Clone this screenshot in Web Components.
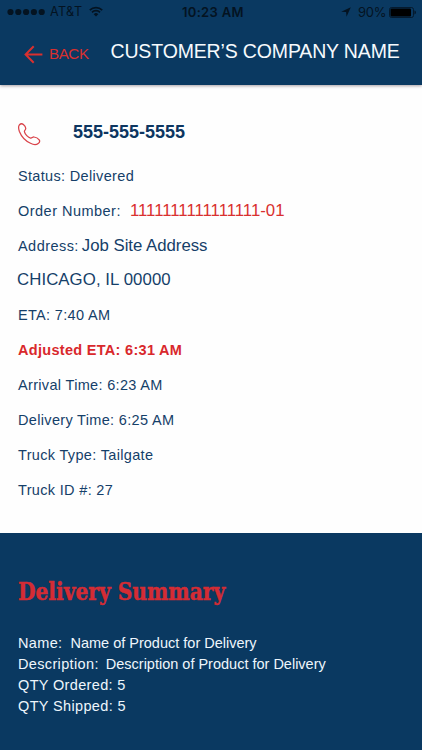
<!DOCTYPE html>
<html lang="en">
<head>
<meta charset="utf-8">
<title>Delivery details</title>
<style>
  html, body { margin: 0; background: #fefefe; }
  body { font-family: "Liberation Sans", Arial, sans-serif; width: 422px; height: 750px; overflow: hidden; }
</style>
</head>
<body>
<delivery-screen></delivery-screen>
<script>
class BaseElement extends HTMLElement {
  connectedCallback() {
    if (!this.shadowRoot) this.attachShadow({ mode: "open" }).innerHTML = this.render();
  }
}

/* Carrier, clock and battery */
customElements.define("status-bar", class extends BaseElement {
  render() { return `
    <style>
      :host { display: grid; grid-template-columns: 182px 1fr 81px; height: 24px; align-items: center; font: 12.6px/24px Inter, sans-serif; color: #041321; white-space: nowrap; }
      div { display: flex; align-items: center; height: 24px; }
      svg { display: block; flex: none; }
      .left { padding-left: 7px; }
      .carrier { margin-left: 5px; width: 34px; letter-spacing: .4px; }
      .time { font-weight: 600; font-size: 13px; letter-spacing: .3px; }
      .pct { margin-left: 7px; width: 27px; font-size: 13px; letter-spacing: -.3px; }
      .bat { margin-left: 4px; }
    </style>
    <div class="left">
      <svg width="38" height="8" viewBox="0 0 38 8" fill="currentColor"><circle cx="3.5" cy="4" r="3.1"/><circle cx="11.3" cy="4" r="3.1"/><circle cx="19.1" cy="4" r="3.1"/><circle cx="26.9" cy="4" r="3.1"/><circle cx="34.7" cy="4" r="3.1"/></svg>
      <span class="carrier">AT&amp;T</span>
      <svg style="margin-left:5px;margin-top:-2px" width="14" height="11" viewBox="0 0 14 11" fill="none" stroke="currentColor" stroke-width="1.7"><path d="M.8 4.2a8.7 8.7 0 0 1 12.4 0M3 6.4a5.6 5.6 0 0 1 8 0"/><path d="M7 10.6 4.7 8.2a3.3 3.3 0 0 1 4.6 0Z" fill="currentColor" stroke="none"/></svg>
    </div>
    <div><span class="time">10:23 AM</span></div>
    <div>
      <svg style="margin-top:-1px" width="10" height="10" viewBox="0 0 10 10" fill="currentColor"><path d="M9.8.3 5.5 9.8 5.1 5 .2 4.7Z"/></svg>
      <span class="pct">90%</span>
      <svg class="bat" width="27" height="11" viewBox="0 0 27 11"><rect x=".5" y=".5" width="24" height="10" rx="2" fill="none" stroke="currentColor" stroke-width=".8"/><rect x="1.5" y="1.5" width="20.5" height="8" rx="1" fill="#000"/><path d="M25.5 3.6c1.8.6 1.8 3.2 0 3.8Z" fill="currentColor"/></svg>
    </div>`; }
});

customElements.define("back-link", class extends BaseElement {
  render() { return `
    <style>
      :host { display: flex; align-items: center; color: #d9302f; font-size: 15.2px; line-height: 20px; letter-spacing: -.45px; }
      svg { display: block; margin-right: 6px; }
    </style>
    <svg width="19" height="19" viewBox="0 0 19 19" fill="none" stroke="currentColor" stroke-width="2"><path d="M18.4 9.5H1.6M9.7 1.3 1.6 9.5l8.1 8.2"/></svg><slot></slot>`; }
});

customElements.define("app-header", class extends BaseElement {
  render() { return `
    <style>
      :host { display: block; height: 85px; background: #0a3961; box-shadow: 0 1px 3px rgba(60,40,50,.45); position: relative; }
      .bar { display: flex; height: 61px; }
      back-link { height: 20px; margin: 20px 0 0 24px; width: 86.5px; }
      h1 { margin: 15px 0 0; font-weight: 400; font-size: 19.5px; letter-spacing: -.15px; line-height: 24px; color: #f6fafd; white-space: nowrap; }
    </style>
    <status-bar></status-bar>
    <div class="bar"><back-link>BACK</back-link><h1><slot></slot></h1></div>`; }
});

customElements.define("phone-row", class extends BaseElement {
  render() { return `
    <style>
      :host { display: flex; height: 24px; padding: 36px 0 14px 18px; color: #0d3661; }
      svg { display: block; margin: 1.5px 32px 0 0; flex: none; }
      b { font-size: 18px; line-height: 22px; }
    </style>
    <svg width="23" height="23" viewBox="0 0 23 23" fill="none" stroke="#d94249" stroke-width="1.25" stroke-linejoin="round"><path d="M1.3 2C2.400.8 4.300.6 5.400 1.500c1.400 1.200 2.700 3.100 2.200 4.600C7.200 7.200 6.300 7.500 6.400 8.700c.4 2.300 3.800 5.900 6.200 6.400 1.400.2 1.900-1.200 3.400-1.100 1.900.1 4.200 1.500 5.200 2.900.8 1.200.2 2.700-1 3.600-2.100 1.600-4.900 1.200-7.700-.2C7.600 18 3.300 13.300 1.400 8.500.5 5.900.3 3.400 1.300 2Z"/></svg>
    <b><slot></slot></b>`; }
});

/* Label with an optional larger value in the "value" slot */
customElements.define("detail-row", class extends BaseElement {
  render() { return `
    <style>
      :host { display: flex; align-items: baseline; height: 34.85px; line-height: 35.6px; padding-left: 18px; font-size: 14.5px; letter-spacing: .33px; color: #153f69; white-space: nowrap; }
      :host([alert]) { color: #d9282c; font-weight: 700; letter-spacing: .3px; }
      ::slotted([slot=value]) { font-size: 16.8px; letter-spacing: -.02px; margin-left: var(--gap, 0); color: var(--value, inherit); }
    </style>
    <span><slot></slot></span><slot name="value"></slot>`; }
});

customElements.define("summary-line", class extends BaseElement {
  render() { return `
    <style>
      :host { display: flex; height: 21.3px; line-height: 21.3px; font-size: 14.5px; letter-spacing: .35px; color: #eef6fc; white-space: nowrap; }
      ::slotted([slot=value]) { letter-spacing: 0; margin-left: var(--gap, 0); padding-top: .6px; }
    </style>
    <span><slot></slot></span><slot name="value"></slot>`; }
});

customElements.define("summary-panel", class extends BaseElement {
  render() { return `
    <style>
      :host { display: block; box-sizing: border-box; height: 217px; padding: 43px 0 0 18px; background: #0a3961; }
      h2 { margin: 0 0 24.5px; height: 32px; font: 700 24px/32px "DejaVu Serif Condensed", "DejaVu Serif", serif; font-stretch: condensed; -webkit-text-stroke: .5px; color: #d42c34; white-space: nowrap; width: max-content; transform: scaleX(.935); transform-origin: 0 0; }
    </style>
    <h2>Delivery Summary</h2><slot></slot>`; }
});

customElements.define("delivery-screen", class extends BaseElement {
  render() { return `
    <style>
      :host { display: block; width: 422px; height: 750px; overflow: hidden; background: #fefefe; }
      .details { height: 448px; }
      .order { --gap: 9px; --value: #d9302f; letter-spacing: .48px; line-height: 34px; }
      .address { --gap: 3px; letter-spacing: .45px; line-height: 33.6px; }
      .city { font-size: 16.8px; letter-spacing: .08px; padding-left: 17px; line-height: 32px; }
      .name { --gap: 8px; }
      .desc { --gap: 7px; }
    </style>
    <app-header>CUSTOMER’S COMPANY NAME</app-header>
    <div class="details">
      <phone-row>555-555-5555</phone-row>
      <detail-row>Status: Delivered</detail-row>
      <detail-row class="order">Order Number:<span slot="value">1111111111111111-01</span></detail-row>
      <detail-row class="address">Address:<span slot="value">Job Site Address</span></detail-row>
      <detail-row class="city">CHICAGO, IL 00000</detail-row>
      <detail-row>ETA: 7:40 AM</detail-row>
      <detail-row alert>Adjusted ETA: 6:31 AM</detail-row>
      <detail-row>Arrival Time: 6:23 AM</detail-row>
      <detail-row>Delivery Time: 6:25 AM</detail-row>
      <detail-row>Truck Type: Tailgate</detail-row>
      <detail-row>Truck ID #: 27</detail-row>
    </div>
    <summary-panel>
      <summary-line class="name">Name:<span slot="value">Name of Product for Delivery</span></summary-line>
      <summary-line class="desc">Description:<span slot="value">Description of Product for Delivery</span></summary-line>
      <summary-line>QTY Ordered: 5</summary-line>
      <summary-line>QTY Shipped: 5</summary-line>
    </summary-panel>`; }
});
</script>
</body>
</html>
